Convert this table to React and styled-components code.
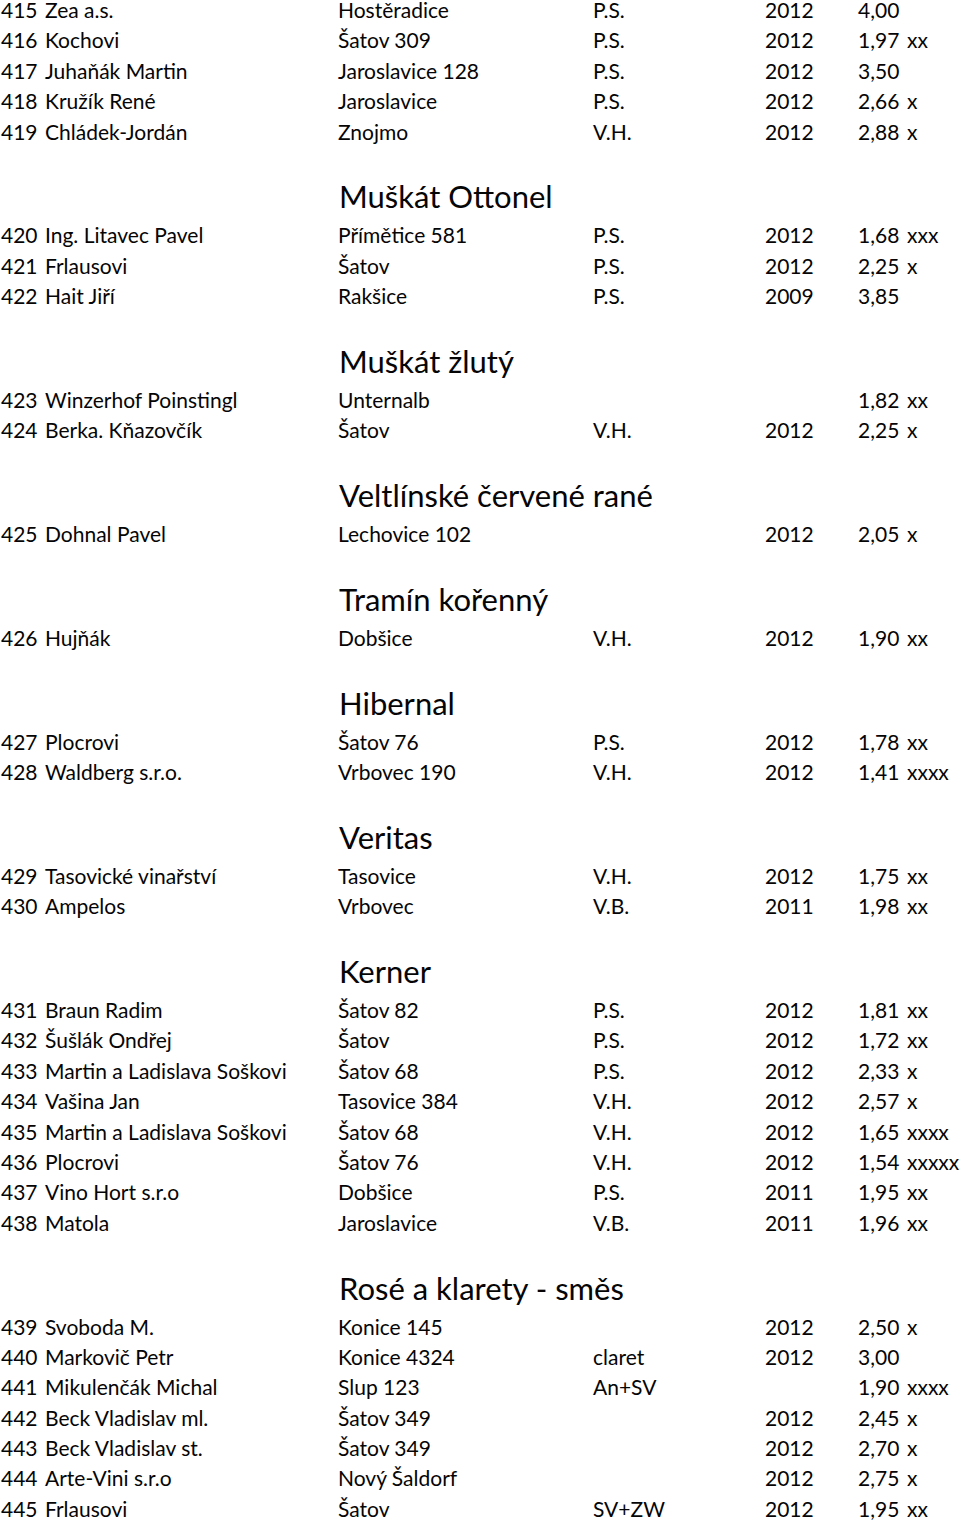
import styled, { createGlobalStyle } from "styled-components";

const GlobalStyle = createGlobalStyle`
  html, body {
    margin: 0;
    padding: 0;
    background: #ffffff;
  }
  body {
    font-family: Lato, "Open Sans", "Liberation Sans", sans-serif;
    color: #050505;
    overflow: hidden;
  }
`;

const sections = [
  {
    rows: [
      ["415", "Zea a.s.", "Hostěradice", "P.S.", "2012", "4,00", ""],
      ["416", "Kochovi", "Šatov 309", "P.S.", "2012", "1,97", "xx"],
      ["417", "Juhaňák Martin", "Jaroslavice 128", "P.S.", "2012", "3,50", ""],
      ["418", "Kružík René", "Jaroslavice", "P.S.", "2012", "2,66", "x"],
      ["419", "Chládek-Jordán", "Znojmo", "V.H.", "2012", "2,88", "x"],
    ],
  },
  {
    title: "Muškát Ottonel",
    rows: [
      ["420", "Ing. Litavec Pavel", "Přímětice 581", "P.S.", "2012", "1,68", "xxx"],
      ["421", "Frlausovi", "Šatov", "P.S.", "2012", "2,25", "x"],
      ["422", "Hait Jiří", "Rakšice", "P.S.", "2009", "3,85", ""],
    ],
  },
  {
    title: "Muškát žlutý",
    rows: [
      ["423", "Winzerhof Poinstingl", "Unternalb", "", "", "1,82", "xx"],
      ["424", "Berka. Kňazovčík", "Šatov", "V.H.", "2012", "2,25", "x"],
    ],
  },
  {
    title: "Veltlínské červené rané",
    rows: [["425", "Dohnal Pavel", "Lechovice 102", "", "2012", "2,05", "x"]],
  },
  {
    title: "Tramín kořenný",
    rows: [["426", "Hujňák", "Dobšice", "V.H.", "2012", "1,90", "xx"]],
  },
  {
    title: "Hibernal",
    rows: [
      ["427", "Plocrovi", "Šatov 76", "P.S.", "2012", "1,78", "xx"],
      ["428", "Waldberg s.r.o.", "Vrbovec 190", "V.H.", "2012", "1,41", "xxxx"],
    ],
  },
  {
    title: "Veritas",
    rows: [
      ["429", "Tasovické vinařství", "Tasovice", "V.H.", "2012", "1,75", "xx"],
      ["430", "Ampelos", "Vrbovec", "V.B.", "2011", "1,98", "xx"],
    ],
  },
  {
    title: "Kerner",
    rows: [
      ["431", "Braun Radim", "Šatov 82", "P.S.", "2012", "1,81", "xx"],
      ["432", "Šušlák Ondřej", "Šatov", "P.S.", "2012", "1,72", "xx"],
      ["433", "Martin a Ladislava Soškovi", "Šatov 68", "P.S.", "2012", "2,33", "x"],
      ["434", "Vašina Jan", "Tasovice 384", "V.H.", "2012", "2,57", "x"],
      ["435", "Martin a Ladislava Soškovi", "Šatov 68", "V.H.", "2012", "1,65", "xxxx"],
      ["436", "Plocrovi", "Šatov 76", "V.H.", "2012", "1,54", "xxxxx"],
      ["437", "Vino Hort s.r.o", "Dobšice", "P.S.", "2011", "1,95", "xx"],
      ["438", "Matola", "Jaroslavice", "V.B.", "2011", "1,96", "xx"],
    ],
  },
  {
    title: "Rosé a klarety - směs",
    rows: [
      ["439", "Svoboda M.", "Konice 145", "", "2012", "2,50", "x"],
      ["440", "Markovič Petr", "Konice 4324", "claret", "2012", "3,00", ""],
      ["441", "Mikulenčák Michal", "Slup 123", "An+SV", "", "1,90", "xxxx"],
      ["442", "Beck Vladislav ml.", "Šatov 349", "", "2012", "2,45", "x"],
      ["443", "Beck Vladislav st.", "Šatov 349", "", "2012", "2,70", "x"],
      ["444", "Arte-Vini s.r.o", "Nový Šaldorf", "", "2012", "2,75", "x"],
      ["445", "Frlausovi", "Šatov", "SV+ZW", "2012", "1,95", "xx"],
    ],
  },
];

const App = () => {
  return (
    <>
      <GlobalStyle />
      <Sheet>
        {sections.map((section, i) => (
          <Section key={i} $spaced={Boolean(section.title)}>
            {section.title && <Heading>{section.title}</Heading>}
            {section.rows.map((row) => (
              <Row key={row[0]}>
                {row.map((cell, j) => (
                  <Cell key={j}>{cell}</Cell>
                ))}
              </Row>
            ))}
          </Section>
        ))}
      </Sheet>
    </>
  );
};

const Sheet = styled.main`
  display: flex;
  flex-direction: column;
  margin-top: -5px;
  padding-left: 1px;
`;

const Section = styled.section`
  display: flex;
  flex-direction: column;
  margin-top: ${(p) => (p.$spaced ? "30.4px" : "0")};
`;

const Heading = styled.h2`
  margin: 0;
  padding: 1px 0 6px 338px;
  font-size: 31px;
  font-weight: 400;
  line-height: 36px;
  white-space: nowrap;
`;

const Row = styled.div`
  display: grid;
  grid-template-columns: 44px 293px 255px 172px 93px 49px 1fr;
  height: 30.4px;
  font-size: 21px;
  line-height: 30.4px;
`;

const Cell = styled.span`
  white-space: nowrap;
`;

export default App;
